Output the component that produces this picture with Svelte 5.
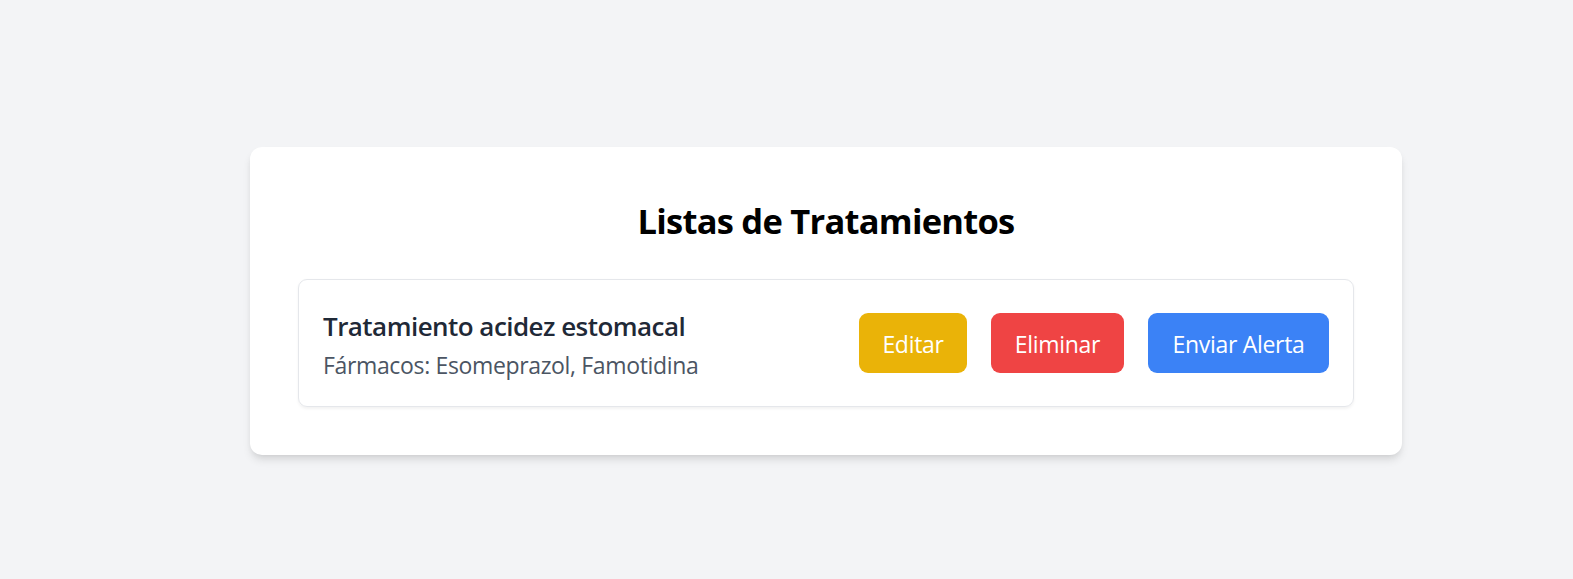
<script>
  const treatments = [
    { name: 'Tratamiento acidez estomacal', drugs: ['Esomeprazol', 'Famotidina'] }
  ];
</script>

<main>
  <section class="card">
    <h1>Listas de Tratamientos</h1>
    <ul>
      {#each treatments as item}
        <li>
          <div class="info">
            <h2>{item.name}</h2>
            <p>Fármacos: {item.drugs.join(', ')}</p>
          </div>
          <div class="actions">
            <button class="edit">Editar</button>
            <button class="remove">Eliminar</button>
            <button class="alert">Enviar Alerta</button>
          </div>
        </li>
      {/each}
    </ul>
  </section>
</main>

<style>
  :global(body) {
    background: #f3f4f6;
  }
  main {
    box-sizing: border-box;
    height: 579px;
    padding: 147px 171px 0 250px;
    overflow: hidden;
    font-family: 'Open Sans', 'Noto Sans', sans-serif;
  }
  .card {
    box-sizing: border-box;
    height: 308px;
    padding: 50px 48px 48px;
    border-radius: 12px;
    background: #fff;
    box-shadow: 0 6px 9px -1.5px rgba(0, 0, 0, 0.1), 0 3px 6px -3px rgba(0, 0, 0, 0.1);
  }
  h1 {
    margin: 0 0 34px;
    font-size: 34.5px;
    line-height: 48px;
    font-weight: 700;
    text-align: center;
    color: #000;
    letter-spacing: -0.76px;
  }
  ul {
    margin: 0;
    padding: 0;
    list-style: none;
  }
  li {
    box-sizing: border-box;
    display: flex;
    justify-content: space-between;
    align-items: center;
    height: 128px;
    padding: 0 24px;
    border: 1px solid #e5e7eb;
    border-radius: 9px;
    box-shadow: 0 1.5px 3px rgba(0, 0, 0, 0.05);
  }
  .info {
    padding-top: 1px;
  }
  h2 {
    margin: 0;
    font-size: 26px;
    line-height: 42px;
    font-weight: 600;
    color: #1f2937;
    letter-spacing: -0.54px;
  }
  p {
    margin: 0;
    font-size: 23px;
    line-height: 36px;
    color: #4b5563;
    letter-spacing: -0.35px;
  }
  .actions {
    display: flex;
    gap: 24px;
  }
  button {
    height: 60px;
    padding: 1px 0 0;
    border: 0;
    border-radius: 9px;
    font-family: inherit;
    font-size: 23px;
    line-height: 36px;
    color: #fff;
    letter-spacing: -0.3px;
  }
  .edit {
    width: 108px;
    background: #eab308;
  }
  .remove {
    width: 133px;
    background: #ef4444;
  }
  .alert {
    width: 181px;
    background: #3b82f6;
  }
</style>
